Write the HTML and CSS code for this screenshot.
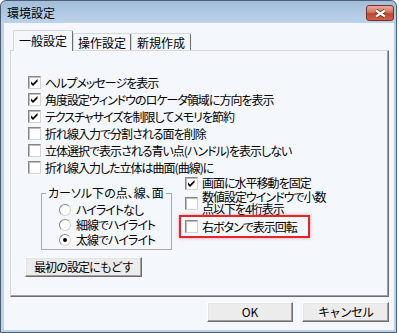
FILE: index.html
```html
<!DOCTYPE html>
<html lang="ja">
<head>
  <meta charset="UTF-8">
  <meta name="viewport" content="width=device-width, initial-scale=1.0">
  <title>環境設定</title>
  <link rel="stylesheet" href="styles.css">
</head>
<body>

<div class="window">
  <div class="titlebar">
    <span class="title">環境設定</span>
    <button class="close-btn" aria-label="閉じる">
      <svg width="13" height="9" viewBox="0 0 13 9">
        <path d="M2 1.5 L11 7.5 M11 1.5 L2 7.5" stroke="#5e2117" stroke-width="3.8" fill="none"/>
        <path d="M2 1.5 L11 7.5 M11 1.5 L2 7.5" stroke="#fff" stroke-width="2.2" fill="none"/>
      </svg>
    </button>
  </div>

  <div class="client">
    <div class="tabs">
      <div class="tab active">一般設定</div>
      <div class="tab">操作設定</div>
      <div class="tab">新規作成</div>
    </div>

    <div class="panel">
      <!-- 上段のチェック項目 -->
      <div class="check-list">
        <label class="check"><span class="box"><svg width="11" height="11" viewBox="0 0 11 11"><polygon points="2,4.5 4,6.5 8.5,2 8.5,4.5 4,9 2,7"/></svg></span>ヘルプメッセージを表示</label>
        <label class="check"><span class="box"><svg width="11" height="11" viewBox="0 0 11 11"><polygon points="2,4.5 4,6.5 8.5,2 8.5,4.5 4,9 2,7"/></svg></span>角度設定ウィンドウのロケータ領域に方向を表示</label>
        <label class="check"><span class="box"><svg width="11" height="11" viewBox="0 0 11 11"><polygon points="2,4.5 4,6.5 8.5,2 8.5,4.5 4,9 2,7"/></svg></span>テクスチャサイズを制限してメモリを節約</label>
        <label class="check"><span class="box"></span>折れ線入力で分割される面を削除</label>
        <label class="check"><span class="box"></span>立体選択で表示される青い点(ハンドル)を表示しない</label>
        <label class="check"><span class="box"></span>折れ線入力した立体は曲面(曲線)に</label>
      </div>

      <div class="lower">
        <fieldset class="group">
          <legend>カーソル下の点、線、面</legend>
          <label class="radio"><span class="dot"></span>ハイライトなし</label>
          <label class="radio"><span class="dot"></span>細線でハイライト</label>
          <label class="radio"><span class="dot selected"></span>太線でハイライト</label>
        </fieldset>

        <div class="right-col">
          <label class="check"><span class="box"><svg width="11" height="11" viewBox="0 0 11 11"><polygon points="2,4.5 4,6.5 8.5,2 8.5,4.5 4,9 2,7"/></svg></span>画面に水平移動を固定</label>
          <label class="check multi"><span class="box"></span><span>数値設定ウインドウで小数<br>点以下を4桁表示</span></label>
          <div class="highlight">
            <label class="check"><span class="box"></span>右ボタンで表示回転</label>
          </div>
        </div>
      </div>

      <button class="btn reset">最初の設定にもどす</button>
    </div>

    <div class="actions">
      <button class="btn ok">OK</button>
      <button class="btn cancel">キャンセル</button>
    </div>
  </div>
</div>

</body>
</html>
```

FILE: styles.css
```css
:root {
  --client-bg: #f4f7fc;
  --frame: #bdd2e8;
  --text: #000000;
  --shadow: #6d6d6d;
  --mid: #a0a0a0;
  --light: #e3e3e3;
  --mark: #e3262c;
}

* {
  margin: 0;
  padding: 0;
  box-sizing: border-box;
}

body {
  font-family: "Noto Sans CJK JP", "Noto Sans", sans-serif;
  font-size: 12px;
  line-height: 12px;
  color: var(--text);
  background: #ffffff;
  font-feature-settings: "palt";
}

.window {
  width: 397px;
  height: 333px;
  border: 1px solid #4b5e74;
  border-radius: 6px 6px 0 0;
  background: linear-gradient(#a2bedb, var(--frame) 22px);
  display: flex;
  flex-direction: column;
}

.titlebar {
  height: 22px;
  display: flex;
  justify-content: space-between;
  align-items: flex-start;
  padding: 4px 2px 0 6px;
}

.title {
  padding-top: 2px;
}

.close-btn {
  width: 28px;
  height: 16px;
  border: 1px solid #7b3024;
  border-radius: 3px;
  background: linear-gradient(#e9ab9c, #d27561 45%, #c2432c 55%, #d0604a);
  display: flex;
  align-items: center;
  justify-content: center;
}

.client {
  flex: 1;
  margin: 0 2px 2px 3px;
  padding: 7px 5px 8px 6px;
  background: var(--client-bg);
  display: flex;
  flex-direction: column;
}

/* タブ */
.tabs {
  height: 21px;
  margin-bottom: -1px;
  padding-left: 3px;
  display: flex;
  align-items: flex-end;
  position: relative;
  z-index: 1;
}

.tab {
  height: 17px;
  margin-bottom: 1px;
  width: 58px;
  padding-top: 3px;
  text-align: center;
  background: var(--client-bg);
  border-top: 1px solid #d7d7d7;
  border-left: 1px solid #d7d7d7;
  border-right: 1px solid var(--shadow);
  border-radius: 2px 2px 0 0;
}

.tab.active {
  width: 60px;
  height: 21px;
  margin-bottom: 0;
  padding-top: 4px;
}

.tab:last-child {
  width: 60px;
}

.panel {
  height: 247px;
  padding: 23px 0 0 17px;
  border-top: 1px solid #d7d7d7;
  border-left: 1px solid #d7d7d7;
  border-right: 1px solid var(--shadow);
  border-bottom: 1px solid var(--shadow);
  box-shadow: inset -1px -1px 0 var(--mid);
}

/* チェックボックス */
.check {
  height: 17px;
  display: flex;
  align-items: center;
  gap: 4px;
  white-space: nowrap;
  letter-spacing: -1px;
}

.box {
  width: 13px;
  height: 13px;
  flex-shrink: 0;
  background: #ffffff;
  border: 1px solid;
  border-color: #858686 #d4d4d4 #d4d4d4 #858686;
  box-shadow: inset 1px 1px 0 #bdbdbd;
  display: flex;
}

.box svg {
  fill: #000000;
}

.lower {
  margin-top: -1px;
  display: flex;
  align-items: flex-start;
}

.group {
  width: 131px;
  margin: 12px 0 0 13px;
  padding: 3px 0 2px 0;
  border: 1px solid #a9a9a9;
}

.group legend {
  margin-left: 4px;
  padding: 0 2px;
  line-height: 12px;
}

.radio {
  height: 15px;
  padding-left: 17px;
  display: flex;
  align-items: center;
  gap: 5px;
  letter-spacing: -1px;
}

.dot {
  width: 12px;
  height: 12px;
  border-radius: 50%;
  background: #ffffff;
  border: 1px solid;
  border-color: #858686 #d4d4d4 #d4d4d4 #858686;
  display: flex;
  align-items: center;
  justify-content: center;
}

.dot.selected::after {
  content: "";
  width: 4px;
  height: 4px;
  border-radius: 50%;
  background: #000000;
}

.right-col {
  margin-left: 13px;
  display: flex;
  flex-direction: column;
}

.right-col > .check:first-child {
  height: 16px;
}

.check.multi {
  height: 24px;
}

.highlight {
  width: 131px;
  height: 23px;
  margin-left: -6px;
  padding-left: 4px;
  border: 2px solid var(--mark);
  box-shadow: 0 0 3px rgba(227, 38, 44, 0.45);
  display: flex;
  align-items: center;
}

/* ボタン */
.btn {
  height: 20px;
  font-family: inherit;
  font-size: 12px;
  line-height: 12px;
  letter-spacing: -1px;
  color: var(--text);
  background: #ececec;
  border: 1px solid;
  border-color: #ffffff var(--shadow) var(--shadow) #ffffff;
  box-shadow: inset -1px -1px 0 var(--mid), inset 1px 1px 0 var(--light);
}

.ok {
  letter-spacing: 0;
}

.reset {
  width: 117px;
  margin: 7px 0 0 -3px;
}

.actions {
  margin-top: 5px;
  display: flex;
  justify-content: flex-end;
  gap: 9px;
}

.ok {
  width: 86px;
}

.cancel {
  width: 87px;
}
```
